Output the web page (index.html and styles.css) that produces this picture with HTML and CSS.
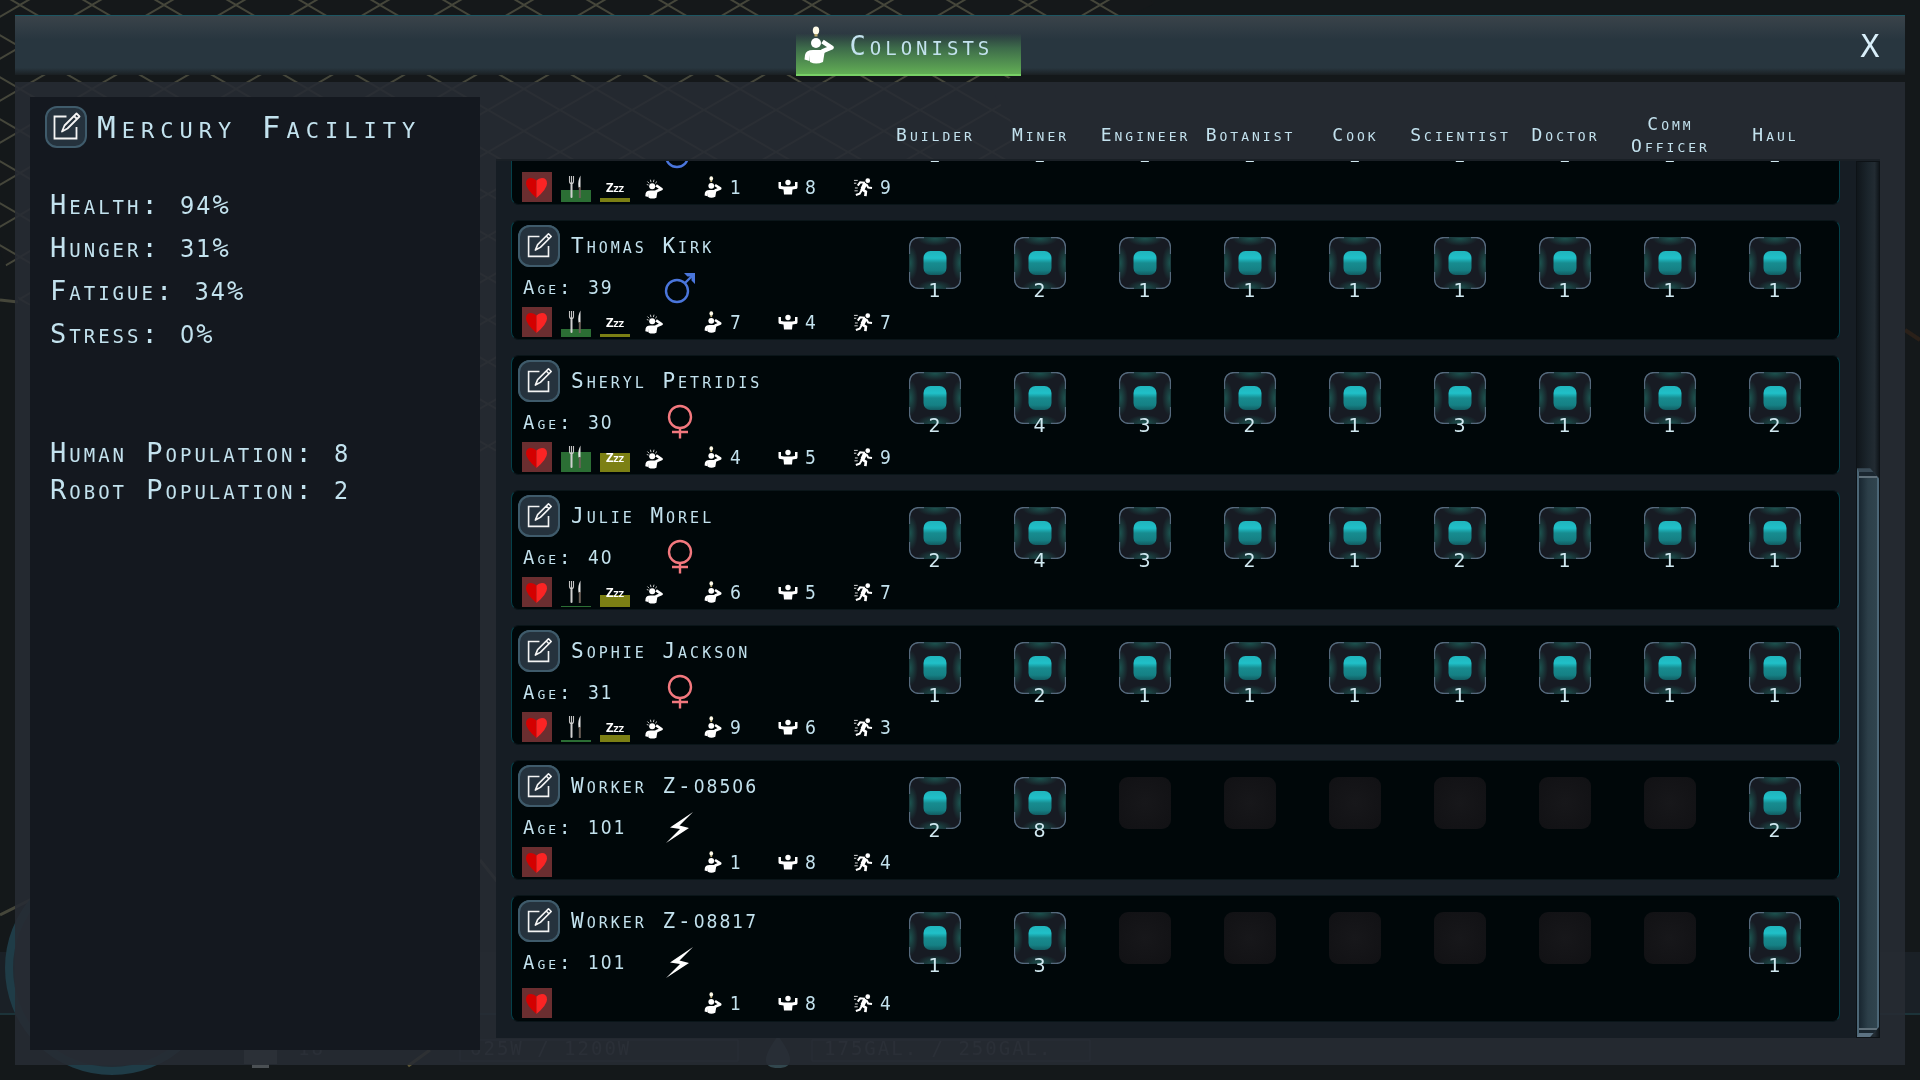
FILE: index.html
```html
<!DOCTYPE html>
<html lang="en">
<head>
  <meta charset="UTF-8">
  <meta name="viewport" content="width=device-width, initial-scale=1.0">
  <title>Colonists</title>
  <link rel="stylesheet" href="styles.css">
</head>
<body>
  <!-- Icon set -->
  <svg class="defs" aria-hidden="true">
    <defs>
      <linearGradient id="gem" x1="0" y1="0" x2="0" y2="1">
        <stop offset="0" stop-color="#20b4bc"/>
        <stop offset="0.3" stop-color="#20c0c8"/>
        <stop offset="0.5" stop-color="#178c90"/>
        <stop offset="0.8" stop-color="#158084"/>
        <stop offset="1" stop-color="#125c62"/>
      </linearGradient>
      <radialGradient id="edge">
        <stop offset="0" stop-color="#1c5450"/>
        <stop offset="1" stop-color="#1c5450" stop-opacity="0"/>
      </radialGradient>
      <clipPath id="cell-clip"><rect width="52" height="52" rx="9"/></clipPath>
    </defs>
    <symbol id="edit" viewBox="0 0 42 42">
      <path d="M21.5 10.500H9.500V32.500H31.500V21" fill="none" stroke="#f4f4f4" stroke-width="1.800"/>
      <path d="M17 25.500l2.500-6L31.500 7.500l3 3L22.500 22.500zM29 10l3 3" fill="none" stroke="#f4f4f4" stroke-width="1.800" stroke-linejoin="round"/>
    </symbol>
    <symbol id="think" viewBox="0 0 30 38">
      <ellipse cx="12" cy="4.500" rx="3.200" ry="4" fill="#fffbe8"/>
      <path d="M10.500 8h3v2.500h-3z" fill="#b9a86a"/>
      <circle cx="12" cy="17" r="5"/>
      <path d="M18.500 15.500L27.500 21.500L18 25.500" fill="none" stroke="#fff" stroke-width="4.500" stroke-linejoin="round"/>
      <path d="M1 29Q2 24 9 24H21L19 36Q12 39 6 36L5.500 29V35L0.500 33.500Z"/>
    </symbol>
    <symbol id="stress" viewBox="0 0 30 38">
      <path d="M4 9l3 3M9 6l1 4M15 6l-1 4M20 9l-3 3M3 14l3 1" stroke="#fff" stroke-width="1.300"/>
      <circle cx="12" cy="17" r="5"/>
      <path d="M18.500 15.500L27.500 21.500L18 25.500" fill="none" stroke="#fff" stroke-width="4.500" stroke-linejoin="round"/>
      <path d="M1 29Q2 24 9 24H21L19 36Q12 39 6 36L5.500 29V35L0.500 33.500Z"/>
    </symbol>
    <symbol id="strong" viewBox="0 0 20 16">
      <circle cx="10" cy="3.500" r="2.700"/>
      <path d="M0.500 3h2.500v4l3 0.500h8l3-0.500V3h2.500v5.500q0 1.500-2 1.500l-3 0.500-0.500 5h-8l-0.500-5-3-0.500q-2 0-2-1.500z"/>
    </symbol>
    <symbol id="run" viewBox="0 0 20 20">
      <circle cx="15" cy="2.800" r="2.500"/>
      <path d="M12.500 5.500L9 12L13 14.500L12.500 19" fill="none" stroke="#fff" stroke-width="2.800"/>
      <path d="M12.500 5.500L9.500 11.500" stroke="#fff" stroke-width="4.500"/>
      <path d="M9 12L6.500 16.500L2.500 18M12 5L7 4.500L4.500 8M13.500 6.500L15.500 10L19.500 10.500" fill="none" stroke="#fff" stroke-width="2.200"/>
      <path d="M0.500 2.500h4M0.500 5.500h2.500M1.500 10.500h3M1 13.500h3.500" stroke="#fff" stroke-width="0.900"/>
    </symbol>
    <symbol id="heart" viewBox="0 0 30 30">
      <path d="M14.500 26Q4 17 4 11.500Q4 6 9 6Q12.500 6 14.500 8.500Z" fill="#d40000"/>
      <path d="M14.500 26Q25 17 25 11.500Q25 6 20 6Q16.500 6 14.500 8.500Z" fill="#fb2424"/>
    </symbol>
    <symbol id="food" viewBox="0 0 30 30">
      <path d="M8.500 4v5.500q0 2 2 2t2-2V4M10.500 4v6" fill="none" stroke="#c4c4c4" stroke-width="1.100"/>
      <path d="M10.500 11v14" stroke="#d0d0d0" stroke-width="2" stroke-linecap="round"/>
      <path d="M19.500 3.500q-3 5-2 12h2z" fill="#e4e4e4"/>
      <path d="M18.800 15v11" stroke="#6e625a" stroke-width="2"/>
    </symbol>
    <symbol id="male" viewBox="0 0 36 36">
      <circle cx="14" cy="22" r="11" fill="none" stroke="#4a76dc" stroke-width="2.400"/>
      <path d="M21.500 14.500L30 6" stroke="#4a76dc" stroke-width="2.400"/>
      <path d="M21 4h11v11l-3.500-3.500V7.500h-4z" fill="#4a76dc"/>
    </symbol>
    <symbol id="female" viewBox="0 0 36 36">
      <circle cx="17" cy="13" r="11" fill="none" stroke="#f2787e" stroke-width="2.400"/>
      <path d="M17 24v10.500M9 28h16" stroke="#f2787e" stroke-width="2.400"/>
    </symbol>
    <symbol id="robot" viewBox="0 0 36 36">
      <path d="M30 3L7 18.500l10 1.500L3 34l23-15-9.500-2.500z" fill="#fff"/>
    </symbol>
    <symbol id="cell" viewBox="0 0 52 52">
      <g clip-path="url(#cell-clip)">
        <rect width="52" height="52" fill="#171b23"/>
        <ellipse cx="26" cy="1" rx="18" ry="8" fill="url(#edge)"/>
        <ellipse cx="26" cy="51" rx="18" ry="8" fill="url(#edge)"/>
        <ellipse cx="1" cy="26" rx="8" ry="18" fill="url(#edge)"/>
        <ellipse cx="51" cy="26" rx="8" ry="18" fill="url(#edge)"/>
      </g>
      <rect x="0.500" y="0.500" width="51" height="51" rx="9" fill="none" stroke="#1c3d40"/>
      <path d="M0.500 17V10Q1 1 10 0.500h5M37 0.500h5Q51 1 51.500 10v7M51.500 35v7Q51 51 42 51.500h-5M15 51.500h-5Q1 51 0.500 42v-7" fill="none" stroke="#56697d" stroke-width="1.300"/>
      <rect x="14.500" y="14" width="23" height="24" rx="7" fill="url(#gem)"/>
    </symbol>
  </svg>

  <!-- Dimmed colony map behind the window -->
  <svg class="scene" viewBox="0 0 1920 1080" preserveAspectRatio="none" aria-hidden="true">
    <defs>
      <pattern id="tiles" width="72" height="42" patternUnits="userSpaceOnUse" patternTransform="translate(20 -16)">
        <path d="M0 21L36 0L72 21L36 42Z" fill="#15181a" stroke="#45463a" stroke-width="2"/>
      </pattern>
    </defs>
    <path d="M0 0H1150L1155 3L1065 50L990 88L1030 150L480 460L20 302L0 250Z" fill="url(#tiles)"/>
    <path d="M0 915L60 885M480 860L500 885M0 300L18 302" stroke="#45463a" stroke-width="3"/>
    <path d="M1905 330L1920 340" stroke="#2a2019" stroke-width="4"/>
    <path d="M0 952H1920V1014H0Z" fill="#1a2026"/>
    <path d="M0 1014H1920" stroke="#1c3339" stroke-width="2"/>
    <circle cx="112" cy="968" r="103" fill="#232b33" stroke="#1f3c47" stroke-width="8"/>
    <path d="M244 1046h33v18h-33zM252 1064h17v4h-17z" fill="#4b5054"/>
    <path d="M408 1066L430 1050" stroke="#5c5636" stroke-width="3"/>
    <path d="M778 1036q-24 32 0 32t0-32z" fill="#32474e"/>
    <path d="M460 1040h278v21h-278zM812 1040h278v21h-278z" fill="none" stroke="#39424b"/>
    <g class="scene-text">
      <text x="298" y="1055">18</text>
      <text x="470" y="1055">625W / 1200W</text>
      <text x="824" y="1055">175GAL. / 250GAL.</text>
    </g>
  </svg>

  <div class="window">
    <header class="titlebar">
      <nav class="tabs">
        <button class="tab" type="button">
          <svg class="tab-icon"><use href="#think"/></svg>
          Colonists
        </button>
      </nav>
      <button class="close" type="button" aria-label="Close">X</button>
    </header>

    <div class="panel">
      <aside class="facility">
        <div class="facility-head">
          <button class="edit" type="button" aria-label="Rename facility"><svg><use href="#edit"/></svg></button>
          <h1>Mercury Facility</h1>
        </div>
        <ul class="averages">
          <li>Health: <span class="num">94</span>%</li>
          <li>Hunger: <span class="num">31</span>%</li>
          <li>Fatigue: <span class="num">34</span>%</li>
          <li>Stress: <span class="num">0</span>%</li>
        </ul>
        <ul class="population">
          <li>Human Population: <span class="num">8</span></li>
          <li>Robot Population: <span class="num">2</span></li>
        </ul>
      </aside>

      <main class="crew">
        <div class="jobs">
          <span class="job">Builder</span>
          <span class="job">Miner</span>
          <span class="job">Engineer</span>
          <span class="job">Botanist</span>
          <span class="job">Cook</span>
          <span class="job">Scientist</span>
          <span class="job">Doctor</span>
          <span class="job">Comm Officer</span>
          <span class="job">Haul</span>
        </div>
        <div class="scroller">
          <div class="list" id="list"></div>
          <div class="track"><div class="thumb"></div></div>
        </div>
      </main>
    </div>
  </div>

  <script src="colonists.js"></script>
</body>
</html>
```
FILE: styles.css
```css
:root {
  --text: #c3e2ee;
  --card: #000709;
  --line: #05414a;
  --list-bg: #161d24;
  --side-bg: #14181f;
}

* {
  margin: 0;
  padding: 0;
  box-sizing: border-box;
}

body {
  height: 100vh;
  overflow: hidden;
  background: #14181a;
  color: var(--text);
  font-family: "DejaVu Sans Mono", monospace;
  font-variant-caps: small-caps;
}

button {
  border: none;
  background: none;
  color: inherit;
  font: inherit;
  letter-spacing: inherit;
  cursor: pointer;
}

ul {
  list-style: none;
}

.defs {
  position: absolute;
  width: 0;
  height: 0;
}

.scene {
  position: fixed;
  inset: 0;
  width: 100%;
  height: 100%;
}

.scene-text {
  fill: #454c52;
  font-size: 19px;
  letter-spacing: 2px;
}

.window {
  position: relative;
  height: 100vh;
  padding: 15px;
  display: flex;
  flex-direction: column;
  gap: 7px;
}

/* Title bar */
.titlebar {
  display: flex;
  height: 60px;
  border-top: 1px solid #1d5662;
  background: linear-gradient(#3a434a, #28363f 40%, #28363f 88%, #1a1f22);
}

.tabs {
  flex: 1;
  display: flex;
  justify-content: center;
}

.tab {
  display: flex;
  align-items: center;
  gap: 16px;
  width: 225px;
  height: 60px;
  padding: 0 8px;
  border-bottom: 2px solid #78d066;
  background: linear-gradient(transparent 30%, #3d6b4a 55%, #62ae55);
  font-size: 27px;
  letter-spacing: 4px;
}

.tab-icon {
  flex: none;
  width: 30px;
  height: 38px;
  fill: #fff;
}

.close {
  width: 104px;
  padding-left: 34px;
  font-size: 32px;
  color: #d9effa;
}

/* Main panel */
.panel {
  flex: 1;
  min-height: 0;
  display: grid;
  grid-template-columns: 450px minmax(0, 1fr);
  gap: 16px;
  padding: 0 25px 0 15px;
  background: rgba(39, 43, 51, 0.88);
}

.facility {
  margin: 15px 0;
  padding: 9px 15px;
  background: var(--side-bg);
}

.facility-head {
  display: flex;
  align-items: center;
  gap: 10px;
  margin-bottom: 35px;
}

h1 {
  font-size: 31px;
  font-weight: normal;
  letter-spacing: 6px;
  white-space: nowrap;
}

.edit {
  flex: none;
  width: 42px;
  height: 42px;
  border: 2px solid #3f5b6b;
  border-radius: 12px;
  background: #25323d;
}

.edit svg {
  display: block;
  width: 42px;
  height: 42px;
  margin: -2px;
}

.averages,
.population {
  padding-left: 5px;
  font-size: 27px;
  letter-spacing: 3px;
}

.averages {
  line-height: 43px;
  margin-bottom: 79px;
}

.population {
  line-height: 37px;
}

.num {
  font-family: "DejaVu Sans Condensed", "DejaVu Sans", sans-serif;
  font-stretch: condensed;
  line-height: 1;
  letter-spacing: 2px;
}

.averages .num,
.population .num {
  font-size: 25px;
}

.crew {
  display: flex;
  flex-direction: column;
  min-height: 0;
  padding-bottom: 27px;
}

.jobs,
.card {
  display: grid;
  grid-template-columns: 370px repeat(9, minmax(0, 1fr));
}

.jobs {
  height: 77px;
  padding: 28px 52px 0 17px;
  align-items: center;
  font-size: 18px;
  line-height: 22px;
  letter-spacing: 3px;
  text-align: center;
}

.job {
  margin: 0 -4px;
}

.job:first-child {
  grid-column: 2;
}

.scroller {
  flex: 1;
  min-height: 0;
  display: flex;
  gap: 16px;
  padding-left: 15px;
  border-top: 2px solid #1a2026;
  background: var(--list-bg);
}

/* The list is scrolled to its end */
.list {
  flex: 1;
  display: flex;
  flex-direction: column;
  justify-content: flex-end;
  gap: 15px;
  padding-bottom: 16px;
  overflow: hidden;
}

.card {
  flex: none;
  height: 120px;
  padding-right: 12px;
  border: 1px solid #0a1519;
  border-left-color: var(--line);
  border-right-color: var(--line);
  border-radius: 8px;
  background: var(--card);
}

.info {
  display: flex;
  flex-direction: column;
  padding: 4px 0 5px 6px;
  font-size: 19px;
}

.card:last-child {
  height: 127px;
}

.card:last-child .info {
  padding-bottom: 3px;
}

.name {
  display: flex;
  align-items: center;
  gap: 11px;
  height: 42px;
  letter-spacing: 3px;
  white-space: nowrap;
}

.name h2 {
  font-size: 21px;
  font-weight: normal;
}

.name .num {
  font-size: 19px;
}

.age {
  display: grid;
  grid-template-columns: 140px 36px;
  align-items: center;
  padding-left: 5px;
  height: 40px;
  letter-spacing: 3px;
}

.age svg {
  grid-column: 2;
  width: 36px;
  height: 36px;
}

.stats {
  display: grid;
  grid-template-columns: repeat(4, 30px) auto;
  gap: 9px;
  height: 30px;
  margin-top: auto;
  padding-left: 4px;
}

.need {
  position: relative;
  display: flex;
  align-items: center;
  justify-content: center;
  height: 30px;
}

.need svg {
  position: relative;
  width: 30px;
  height: 30px;
}

.need .stress {
  width: 18px;
  height: 23px;
  fill: #fff;
}

.level {
  position: absolute;
  left: 0;
  right: 0;
  bottom: 0;
}

.level.health { background: #6b2e30; }
.level.food { background: #2b6e34; }
.level.sleep { background: #7c8014; }

.zzz {
  position: relative;
  font: bold 13px "Open Sans", sans-serif;
  font-variant-caps: small-caps;
  line-height: 28px;
  color: #fff;
}

.skills {
  grid-column: 5;
  display: grid;
  grid-template-columns: repeat(3, 75px);
  padding-left: 23px;
}

.skill {
  display: flex;
  align-items: center;
  gap: 5px;
}

.skill svg {
  width: 24px;
  height: 22px;
  fill: #fff;
}

.skill .run {
  height: 19px;
}

.skill .strong {
  height: 16px;
}

/* Job priority */
.priority {
  position: relative;
  justify-self: center;
  width: 52px;
  height: 52px;
  margin-top: 16px;
}

.priority svg {
  display: block;
  width: 52px;
  height: 52px;
}

.priority span {
  position: absolute;
  left: 0;
  right: 0;
  bottom: -12px;
  font-family: "DejaVu Sans", sans-serif;
  font-size: 19px;
  line-height: 22px;
  text-align: center;
  color: #d0e8f0;
}

.priority:disabled {
  border-radius: 9px;
  background: radial-gradient(#17171a, #111114);
}

/* Scrollbar */
.track {
  width: 24px;
  display: flex;
  flex-direction: column;
  justify-content: flex-end;
  border: 1px solid #0d1216;
  background: linear-gradient(90deg, #10161b, #1b252c 50%, #222b32 80%, #10161b);
}

.thumb {
  height: 65%;
  min-height: 40px;
  border: 2px solid #4c6676;
  border-top: 4px solid #3a4b57;
  border-bottom: 4px solid #5c7282;
  background:
    linear-gradient(#1b2730, #1b2730 4px, #60707a 4px, #60707a 6px, transparent 6px),
    linear-gradient(0deg, #1b2730, #1b2730 3px, #60707a 3px, #60707a 5px, transparent 5px),
    linear-gradient(90deg, #182630, #2c3f49 50%, #30444e);
  clip-path: polygon(0 0, 60% 0, 100% 10px, 100% calc(100% - 10px), 60% 100%, 0 100%);
}
```
FILE: colonists.js
```js
// need levels are percentages, skills are [mind, strength, speed]
const colonists = [
  { name: '', kind: 'male', food: 40, sleep: 14, skills: [1, 8, 9], jobs: [1, 1, 1, 1, 1, 1, 1, 1, 1] },
  { name: 'Thomas Kirk', age: 39, kind: 'male', food: 26, sleep: 10, skills: [7, 4, 7], jobs: [1, 2, 1, 1, 1, 1, 1, 1, 1] },
  { name: 'Sheryl Petridis', age: 30, kind: 'female', food: 67, sleep: 64, skills: [4, 5, 9], jobs: [2, 4, 3, 2, 1, 3, 1, 1, 2] },
  { name: 'Julie Morel', age: 40, kind: 'female', food: 4, sleep: 40, skills: [6, 5, 7], jobs: [2, 4, 3, 2, 1, 2, 1, 1, 1] },
  { name: 'Sophie Jackson', age: 31, kind: 'female', food: 8, sleep: 24, skills: [9, 6, 3], jobs: [1, 2, 1, 1, 1, 1, 1, 1, 1] },
  { name: 'Worker Z-08506', age: 101, kind: 'robot', skills: [1, 8, 4], jobs: [2, 8, 0, 0, 0, 0, 0, 0, 2] },
  { name: 'Worker Z-08817', age: 101, kind: 'robot', skills: [1, 8, 4], jobs: [1, 3, 0, 0, 0, 0, 0, 0, 1] }
];

const icon = (id) => `<svg class="${id}" aria-hidden="true"><use href="#${id}"/></svg>`;

function needs(c) {
  const health = `<div class="need"><div class="level health" style="height: 100%"></div>${icon('heart')}</div>`;
  if (c.kind === 'robot') return health;
  return `${health}
    <div class="need"><div class="level food" style="height: ${c.food}%"></div>${icon('food')}</div>
    <div class="need"><div class="level sleep" style="height: ${c.sleep}%"></div><span class="zzz">Zzz</span></div>
    <div class="need">${icon('stress')}</div>`;
}

function card(c) {
  const skillIcons = ['think', 'strong', 'run'];
  const name = c.name.replace(/\d+/, '<span class="num">$&</span>');
  const age = c.age ? `<span>Age: <span class="num">${c.age}</span></span>` : '';
  return `<article class="card">
    <div class="info">
      <div class="name">
        <button class="edit" type="button" aria-label="Rename">${icon('edit')}</button>
        <h2>${name}</h2>
      </div>
      <div class="age">${age}${icon(c.kind)}</div>
      <div class="stats">
        ${needs(c)}
        <div class="skills">
          ${c.skills.map((s, i) => `<span class="skill">${icon(skillIcons[i])}<span class="num">${s}</span></span>`).join('')}
        </div>
      </div>
    </div>
    ${c.jobs.map(j => j
      ? `<button class="priority" type="button">${icon('cell')}<span>${j}</span></button>`
      : '<button class="priority" type="button" aria-label="Not available" disabled></button>').join('')}
  </article>`;
}

document.getElementById('list').innerHTML = colonists.map(card).join('');
```
